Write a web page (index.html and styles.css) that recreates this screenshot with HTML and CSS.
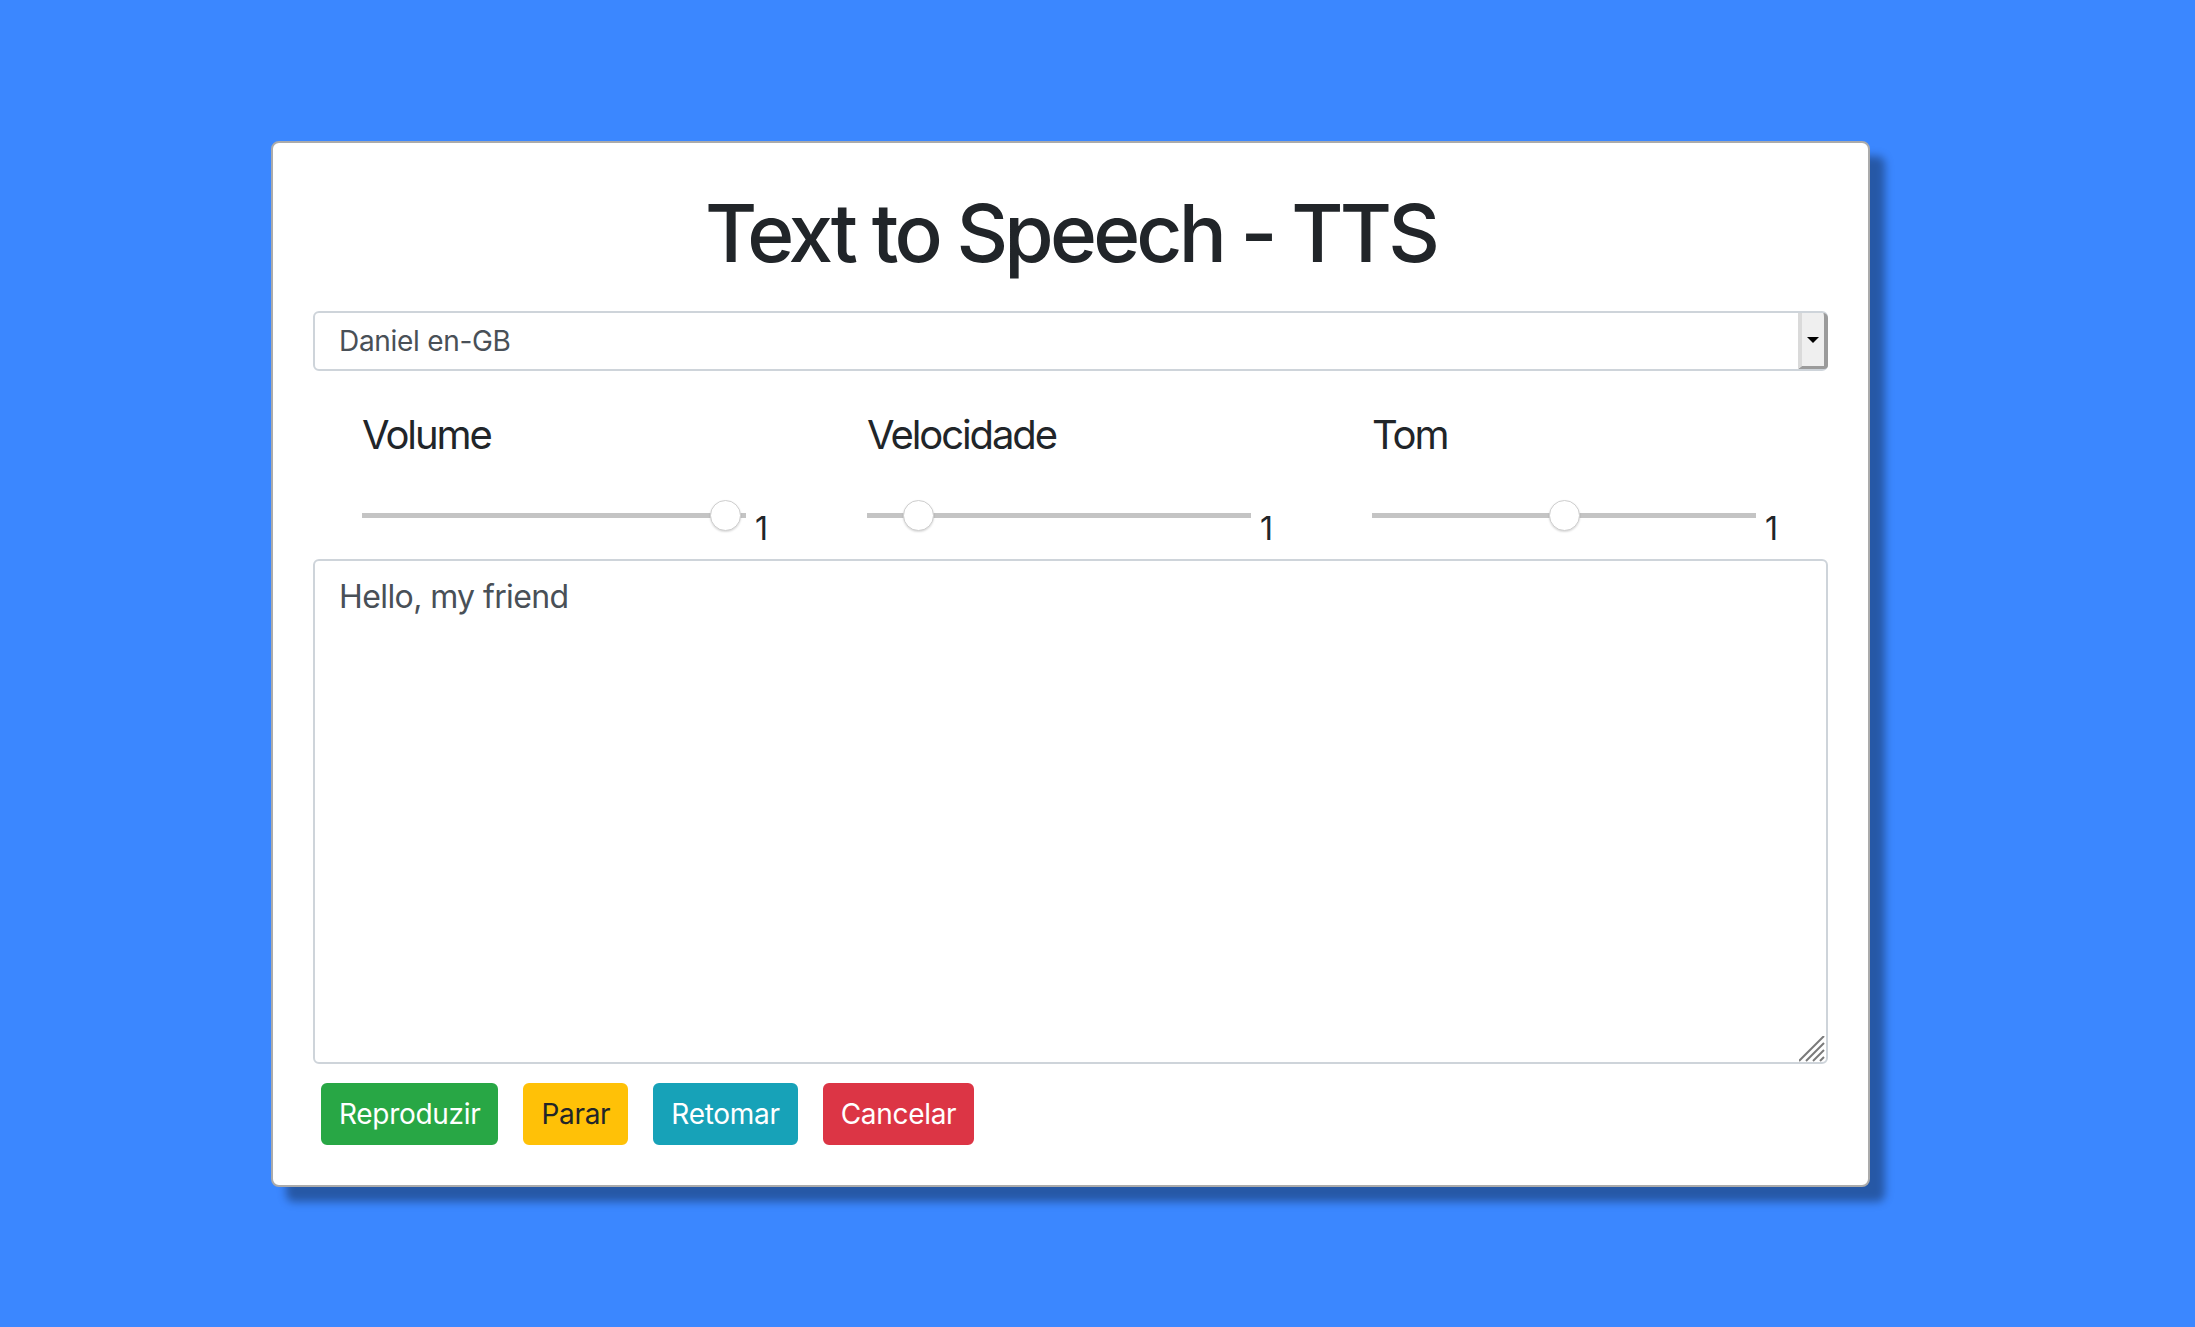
FILE: index.html
```html
<!DOCTYPE html>
<html lang="en">
<head>
<meta charset="utf-8">
<title>Text to Speech - TTS</title>
<link rel="stylesheet" href="styles.css">
</head>
<body>
<div class="card">
  <h1 class="title">Text to Speech - TTS</h1>
  <div class="select-wrap">
    <select class="voice"><option>Daniel en-GB</option></select>
    <span class="select-btn"><span class="caret"></span></span>
  </div>
  <div class="controls">
    <div class="control">
      <h5 class="control-label">Volume</h5>
      <div class="range-row"><div class="slider"><input type="range" class="range" min="0" max="1" step="0.1" value="1"></div><span class="range-value">1</span></div>
    </div>
    <div class="control">
      <h5 class="control-label">Velocidade</h5>
      <div class="range-row"><div class="slider"><input type="range" class="range" min="0.1" max="10" step="0.1" value="1"></div><span class="range-value">1</span></div>
    </div>
    <div class="control">
      <h5 class="control-label">Tom</h5>
      <div class="range-row"><div class="slider"><input type="range" class="range" min="0" max="2" step="0.1" value="1"></div><span class="range-value">1</span></div>
    </div>
  </div>
  <div class="text-wrap">
    <textarea class="text">Hello, my friend</textarea>
    <svg class="grip" width="26" height="26" viewBox="0 0 26 26" aria-hidden="true">
      <g stroke="#7a7a7a" stroke-width="2" stroke-linecap="butt">
        <line x1="0" y1="25" x2="25" y2="0"/>
        <line x1="7" y1="25" x2="25" y2="7"/>
        <line x1="14" y1="25" x2="25" y2="14"/>
        <line x1="21" y1="25" x2="25" y2="21"/>
      </g>
    </svg>
  </div>
  <div class="actions">
    <button class="btn btn-success">Reproduzir</button>
    <button class="btn btn-warning">Parar</button>
    <button class="btn btn-info">Retomar</button>
    <button class="btn btn-danger">Cancelar</button>
  </div>
</div>
</body>
</html>
```
FILE: styles.css
```css
html, body {
  margin: 0;
  padding: 0;
}
body {
  background: #3b87ff;
  font-family: Inter, "Liberation Sans", sans-serif;
  color: #212529;
  min-height: 1327px;
  padding-top: 141px;
  box-sizing: border-box;
}
.card {
  box-sizing: border-box;
  width: 1599px;
  margin-left: 271px;
  padding: 40px;
  background: #fff;
  border: 2px solid #ababab;
  border-radius: 8px;
  box-shadow: 15px 15px 8px rgba(0, 0, 0, 0.35);
}
.title {
  margin: 2px 0 30px;
  font-size: 80px;
  line-height: 96px;
  font-weight: 500;
  text-align: center;
  color: #212529;
  letter-spacing: -3.8px;
}
.select-wrap {
  position: relative;
}
.voice {
  -webkit-appearance: none;
  appearance: none;
  display: block;
  width: 100%;
  height: 60px;
  box-sizing: border-box;
  border: 2px solid #ced4da;
  border-radius: 6px;
  background: #fff;
  padding: 0 24px;
  font-family: Inter, "Liberation Sans", sans-serif;
  font-size: 28px;
  color: #495057;
  letter-spacing: -0.3px;
}
.select-btn {
  position: absolute;
  top: 2px;
  right: 0;
  bottom: 2px;
  width: 30px;
  box-sizing: border-box;
  background: #efefef;
  border-left: 4px solid #dadada;
  border-right: 4px solid #9b9b9b;
  border-bottom: 3px solid #9b9b9b;
  border-top-right-radius: 5px;
  border-bottom-right-radius: 4px;
  display: flex;
  align-items: center;
  justify-content: center;
  pointer-events: none;
}
.caret {
  width: 0;
  height: 0;
  border-left: 6.5px solid transparent;
  border-right: 6.5px solid transparent;
  border-top: 6px solid #000;
  margin-top: 1px;
}
.controls {
  display: grid;
  grid-template-columns: repeat(3, 1fr);
  margin-top: 40px;
}
.control {
  padding-left: 49px;
}
.control-label {
  margin: 0;
  font-size: 40px;
  line-height: 48px;
  font-weight: 400;
  color: #212529;
  letter-spacing: -2.1px;
}
.range-row {
  display: flex;
  align-items: flex-start;
  margin-top: 41px;
  height: 50px;
}
.slider {
  width: 384px;
  height: 31px;
  background: linear-gradient(#c4c4c4, #c4c4c4) center / 100% 5px no-repeat;
  border-radius: 3px;
}
.range {
  -webkit-appearance: none;
  appearance: none;
  display: block;
  width: 374px;
  height: 31px;
  margin: 0 0 0 5px;
  padding: 0;
  background: transparent;
}
.range::-webkit-slider-runnable-track {
  height: 5px;
  background: transparent;
}
.range::-webkit-slider-thumb {
  -webkit-appearance: none;
  appearance: none;
  width: 31px;
  height: 31px;
  margin-top: -13px;
  border-radius: 50%;
  background: #fff;
  border: 1px solid #cfcfcf;
  box-sizing: border-box;
  box-shadow: 0 1px 2px rgba(0, 0, 0, 0.15);
}
.range-value {
  margin-top: 5px;
  margin-left: 9px;
  font-size: 32px;
  line-height: 48px;
  color: #212529;
}
.text-wrap {
  position: relative;
  margin-top: 9px;
}
.text {
  display: block;
  width: 100%;
  height: 505px;
  box-sizing: border-box;
  border: 2px solid #ced4da;
  border-radius: 6px;
  padding: 12px 24px;
  margin: 0;
  font-family: Inter, "Liberation Sans", sans-serif;
  font-size: 32px;
  line-height: 48px;
  color: #495057;
  resize: none;
  letter-spacing: -0.6px;
}
.grip {
  position: absolute;
  right: 3px;
  bottom: 2px;
}
.actions {
  display: flex;
  gap: 25px;
  padding-left: 8px;
  margin-top: 19px;
}
.btn {
  height: 62px;
  box-sizing: border-box;
  padding: 8px 16px;
  border: 2px solid transparent;
  border-radius: 6px;
  font-family: Inter, "Liberation Sans", sans-serif;
  font-size: 28px;
  line-height: 42px;
  letter-spacing: -0.3px;
  color: #fff;
  cursor: pointer;
}
.btn-success {
  background: #28a745;
  border-color: #28a745;
}
.btn-warning {
  background: #ffc107;
  border-color: #ffc107;
  color: #212529;
}
.btn-info {
  background: #17a2b8;
  border-color: #17a2b8;
}
.btn-danger {
  background: #dc3545;
  border-color: #dc3545;
}
```
